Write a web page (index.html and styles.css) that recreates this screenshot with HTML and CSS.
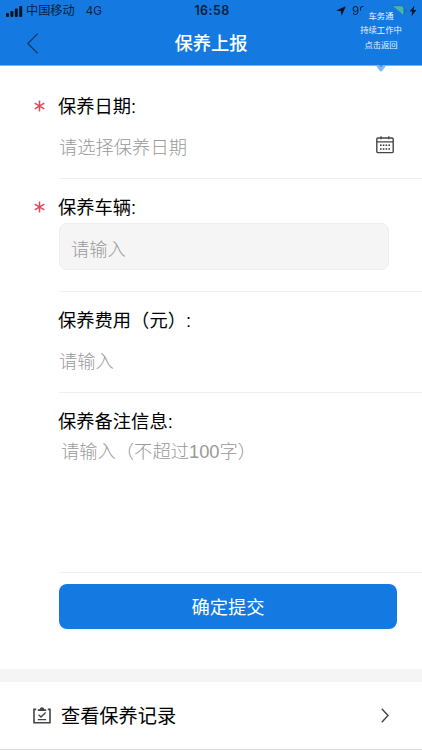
FILE: index.html
```html
<!DOCTYPE html>
<html lang="zh-CN">
<head>
  <meta charset="UTF-8" />
  <meta name="viewport" content="width=device-width, initial-scale=1.0" />
  <title>保养上报</title>
  <link rel="stylesheet" href="styles.css">
</head>
<body>
  <header>
    <div class="status-bar">
      <div class="status-left">
        <svg class="signal" width="17" height="11" viewBox="0 0 17 11">
          <rect x="0" y="7" width="3" height="4" rx="0.8" />
          <rect x="4.4" y="5" width="3" height="6" rx="0.8" />
          <rect x="8.8" y="2.6" width="3" height="8.4" rx="0.8" />
          <rect x="13.2" y="0" width="3" height="11" rx="0.8" />
        </svg>
        <span class="carrier">中国移动</span>
        <span>4G</span>
      </div>
      <span class="clock">16:58</span>
      <div class="status-right">
        <svg width="10" height="10" viewBox="0 0 10 10">
          <path d="M9.8 0.2L5.7 9.8L4.8 5.3L0.1 4.4Z" />
        </svg>
        <span class="battery-text">99</span>
        <svg class="battery" width="34" height="13" viewBox="0 0 34 13">
          <path d="M9 1H17Q19.5 1 19.5 3.4V10Z" fill="#48b6ad" />
          <path d="M7 0.7H17.5Q20.2 0.7 20.2 3.4V10" fill="none" stroke="#276c8b" stroke-width="0.8" />
          <path d="M21.6 4Q23.2 5.7 21.6 7.5Z" fill="#145590" />
          <path d="M30.5 0.5L25.6 6.5H28.4L27.4 11.6L32.3 5H29.5Z" />
        </svg>
      </div>
    </div>
    <div class="nav-bar">
      <a href="#" class="back-btn">
        <svg width="12" height="21" viewBox="0 0 12 21">
          <path d="M10.6 0.6L0.8 10.5L10.6 20.4" fill="none" stroke="#10355e" stroke-width="1.2" />
        </svg>
      </a>
      <h1>保养上报</h1>
    </div>
    <div class="float-tip">
      <p>车务通</p>
      <p>持续工作中</p>
      <p>点击返回</p>
    </div>
    <svg class="tip-arrow" width="12" height="8" viewBox="0 0 12 8">
      <path d="M0.5 0H11.5L7.5 5.6Q6 7.4 4.5 5.6Z" fill="#82b8ee" />
      <path d="M3.8 0H8.2L6 2.2Z" fill="#3d8de2" />
    </svg>
  </header>

  <form class="report-form">
    <div class="field field-date">
      <label for="date"><svg class="required" width="11" height="12" viewBox="0 0 11 12"><path d="M5.5 0.5V11.5M0.7 3.2L10.3 8.8M10.3 3.2L0.7 8.8" /></svg>保养日期:</label>
      <div class="date-row">
        <input type="text" id="date" placeholder="请选择保养日期" readonly>
        <svg class="calendar" width="18" height="18" viewBox="0 0 18 18">
          <rect x="0.8" y="2" width="16.4" height="14.6" rx="1.2" fill="none" stroke="#444" stroke-width="1.4" />
          <path d="M1 5.8H17M5 0.3V3.2M12.8 0.3V3.2" stroke="#444" stroke-width="1.3" />
          <path d="M4 9.3H14M4 13H14" stroke="#333" stroke-width="1.5" stroke-dasharray="1.6 1.2" />
        </svg>
      </div>
    </div>
    <div class="field field-car">
      <label for="car"><svg class="required" width="11" height="12" viewBox="0 0 11 12"><path d="M5.5 0.5V11.5M0.7 3.2L10.3 8.8M10.3 3.2L0.7 8.8" /></svg>保养车辆:</label>
      <input type="text" id="car" class="boxed" placeholder="请输入">
    </div>
    <div class="field field-cost">
      <label for="cost">保养费用（元）:</label>
      <input type="text" id="cost" placeholder="请输入">
    </div>
    <div class="field field-remark">
      <label for="remark">保养备注信息:</label>
      <textarea id="remark" placeholder="请输入（不超过100字）"></textarea>
    </div>
    <button type="button" class="submit-btn">确定提交</button>
  </form>

  <a href="#" class="record-link">
    <svg width="18" height="17" viewBox="0 0 18 17">
      <path d="M3.2 2.4H1V15.8H17V2.4H14.8" fill="none" stroke="#444" stroke-width="1.6" />
      <path d="M4.8 4V2.2H6.6Q7 0.2 9 0.2Q11 0.2 11.4 2.2H13.2V4Z" fill="#444" />
      <path d="M5.6 7.7L8 10L12.6 5.6M4.8 12.6H13.2" fill="none" stroke="#444" stroke-width="1.4" />
    </svg>
    <span>查看保养记录</span>
    <svg class="chevron" width="8" height="15" viewBox="0 0 8 15">
      <path d="M0.8 0.8L7 7.5L0.8 14.2" fill="none" stroke="#444" stroke-width="1.4" />
    </svg>
  </a>
</body>
</html>
```
FILE: styles.css
```css
:root {
  --main-blue: #147ae2;
  --line: #efefef;
  --bg-gray: #f5f5f5;
  --placeholder: #999;
  --required-red: #e0485c;
}

* {
  box-sizing: border-box;
}

body {
  margin: 0;
  height: 750px;
  overflow: hidden;
  background: #fff;
  color: #000;
  font-family: "Liberation Sans", "Noto Sans CJK SC", sans-serif;
}

header {
  position: relative;
  height: 66px;
  background: var(--main-blue);
  border-bottom: 1px solid #7db5ee;
}

.status-bar {
  display: grid;
  grid-template-columns: 1fr auto 1fr;
  align-items: center;
  height: 22px;
  padding: 0 4px 0 6px;
  font-family: Inter, "Noto Sans CJK SC", sans-serif;
  font-size: 11.5px;
  line-height: 22px;
  color: #071f3b;
}

.status-bar svg {
  fill: #071426;
}

.status-left,
.status-right {
  display: flex;
  align-items: center;
}

.status-right {
  justify-content: flex-end;
}

.carrier {
  margin: 0 11px 0 3px;
  font-size: 12.2px;
}

.clock {
  font-size: 12.5px;
  font-weight: 600;
  letter-spacing: 0.4px;
}

/* second digit fades out under the bubble */
.battery-text {
  width: 15px;
  margin: 0 17px 0 6px;
  background: linear-gradient(to bottom right, #071f3b 50%, var(--main-blue) 56%);
  -webkit-background-clip: text;
  background-clip: text;
  color: transparent;
  white-space: nowrap;
}

.nav-bar {
  display: grid;
  grid-template-columns: 60px 1fr 60px;
  align-items: center;
  height: 43px;
}

.back-btn {
  display: flex;
  padding-left: 27px;
}

.nav-bar h1 {
  margin: 0;
  color: #fff;
  font-size: 18.3px;
  font-weight: 500;
  line-height: 43px;
  text-align: center;
}

/* floating return bubble, lies over the status bar */
.float-tip {
  position: absolute;
  top: 9px;
  left: 351px;
  width: 60px;
  color: #e8f3ff;
  font-size: 8.3px;
  line-height: 14.4px;
  text-align: center;
}

.float-tip p {
  margin: 0;
}

.tip-arrow {
  position: absolute;
  top: 65px;
  left: 375px;
}

.report-form {
  height: 603px;
  padding-left: 59px;
}

.field {
  display: flex;
  flex-direction: column;
  border-bottom: 1px solid var(--line);
}

.field label {
  display: flex;
  align-items: center;
  margin-left: -1px;
  height: 28px;
  font-size: 18.3px;
}

.required {
  margin: 2px 13px 0 -24px;
  fill: none;
  stroke: var(--required-red);
  stroke-width: 1.5;
}

input,
textarea {
  display: block;
  width: 100%;
  height: 30px;
  padding: 0;
  border: none;
  outline: none;
  background: none;
  font-family: inherit;
  font-size: 18.3px;
  font-weight: 300;
  resize: none;
}

input::placeholder,
textarea::placeholder {
  color: var(--placeholder);
  opacity: 1;
}

.field-date {
  height: 113px;
  padding-top: 25px;
}

.date-row {
  display: flex;
  align-items: center;
  margin-top: 14px;
  padding-right: 28px;
}

.calendar {
  flex: none;
  margin-top: -6px;
}

.field-car {
  height: 113px;
  padding-top: 13px;
}

.field-car .boxed {
  width: 330px;
  height: 47px;
  margin-top: 3px;
  padding: 6px 11px 0;
  border: 1px solid #eee;
  border-radius: 8px;
  background: var(--bg-gray);
}

.field-cost {
  height: 101px;
  padding-top: 13px;
}

.field-cost input {
  margin-top: 14px;
}

.field-remark {
  height: 180px;
  padding-top: 13px;
}

.field-remark textarea {
  height: 120px;
  margin-top: 4px;
  padding-left: 2px;
  line-height: 28px;
}

.submit-btn {
  display: block;
  width: 338px;
  height: 45px;
  margin-top: 11px;
  padding: 0 0 2px;
  border: none;
  border-radius: 8px;
  background: var(--main-blue);
  color: #fff;
  font-family: inherit;
  font-size: 18.3px;
}

.record-link {
  display: flex;
  align-items: center;
  height: 81px;
  padding: 0 33px;
  border-top: 13px solid var(--bg-gray);
  border-bottom: 1px solid #ddd;
  color: #000;
  font-size: 19.2px;
  text-decoration: none;
}

.record-link span {
  margin: -2px 0 0 10px;
}

.chevron {
  margin-left: auto;
}
```
